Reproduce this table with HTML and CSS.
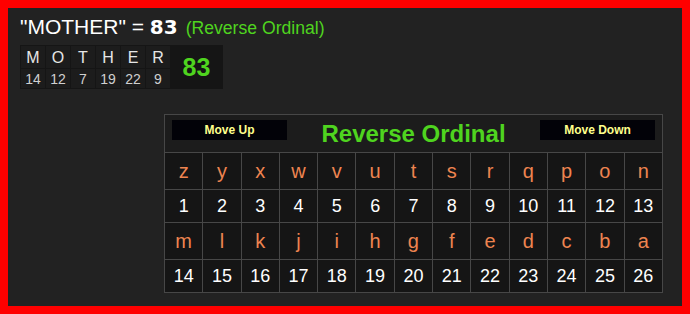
FILE: index.html
```html
<!DOCTYPE html>
<html>
<head>
<meta charset="utf-8">
<link rel="stylesheet" href="styles.css">
</head>
<body>
<div class="page">
  <div class="title">
    <span class="word">"MOTHER" = </span><span class="total">83</span><span class="cipher">(Reverse Ordinal)</span>
  </div>
  <div class="breakdown">
    <div class="bl">M</div><div class="bl">O</div><div class="bl">T</div><div class="bl">H</div><div class="bl">E</div><div class="bl">R</div>
    <div class="bsum">83</div>
    <div class="bn">14</div><div class="bn">12</div><div class="bn">7</div><div class="bn">19</div><div class="bn">22</div><div class="bn">9</div>
  </div>
  <table class="chart">
    <tr class="head">
      <td colspan="13">
        <div class="headbar">
          <button class="mv">Move Up</button>
          <span class="chart-title">Reverse Ordinal</span>
          <button class="mv">Move Down</button>
        </div>
      </td>
    </tr>
    <tr class="let"><td>z</td><td>y</td><td>x</td><td>w</td><td>v</td><td>u</td><td>t</td><td>s</td><td>r</td><td>q</td><td>p</td><td>o</td><td>n</td></tr>
    <tr class="num"><td>1</td><td>2</td><td>3</td><td>4</td><td>5</td><td>6</td><td>7</td><td>8</td><td>9</td><td>10</td><td>11</td><td>12</td><td>13</td></tr>
    <tr class="let"><td>m</td><td>l</td><td>k</td><td>j</td><td>i</td><td>h</td><td>g</td><td>f</td><td>e</td><td>d</td><td>c</td><td>b</td><td>a</td></tr>
    <tr class="num"><td>14</td><td>15</td><td>16</td><td>17</td><td>18</td><td>19</td><td>20</td><td>21</td><td>22</td><td>23</td><td>24</td><td>25</td><td>26</td></tr>
  </table>
</div>
</body>
</html>
```
FILE: styles.css
```css
html, body {
  margin: 0;
  padding: 0;
}
body {
  font-family: "Liberation Sans", Arial, sans-serif;
}
.page {
  box-sizing: border-box;
  width: 690px;
  height: 314px;
  border: 8px solid #ff0000;
  background: #222222;
  padding: 7px 0 0 12px;
}
.title {
  display: flex;
  align-items: baseline;
  height: 23px;
  line-height: 23px;
  color: #ffffff;
}
.word {
  font-size: 21px;
  white-space: pre;
}
.total {
  font-family: "DejaVu Sans", sans-serif;
  font-weight: bold;
  font-size: 20px;
}
.cipher {
  font-size: 17.6px;
  color: #4fd41f;
  margin-left: 8px;
}
.breakdown {
  margin-top: 7px;
  display: grid;
  grid-template-columns: repeat(6, 24px) 51px;
  grid-template-rows: 22px 19px;
  gap: 1px;
  padding: 1px;
  width: max-content;
  background: #151515;
}
.bl, .bn {
  background: #1c1c1c;
  text-align: center;
}
.bl {
  font-size: 16px;
  line-height: 23px;
  color: #e6e6e6;
}
.bn {
  font-size: 14px;
  line-height: 20px;
  color: #d0d0d0;
}
.bsum {
  grid-column: 7;
  grid-row: 1 / span 2;
  display: flex;
  align-items: center;
  justify-content: center;
  font-size: 25px;
  font-weight: bold;
  color: #4fd41f;
}
.chart {
  margin: 25px 0 0 144px;
  width: 499px;
  border-collapse: collapse;
  table-layout: fixed;
  background: #151515;
}
.chart td {
  border: 1px solid #474747;
  text-align: center;
  padding: 0;
}
.head td {
  height: 37px;
  background: #1c1c1c;
  vertical-align: top;
}
.headbar {
  display: flex;
  justify-content: space-between;
  align-items: flex-start;
  padding: 0 7px;
}
.mv {
  margin-top: 5px;
  width: 115px;
  height: 20px;
  background: #020208;
  border: none;
  padding: 0;
  color: #ffff8c;
  font-family: "Liberation Sans", Arial, sans-serif;
  font-weight: bold;
  font-size: 12px;
}
.chart-title {
  margin-top: 5px;
  font-size: 24px;
  font-weight: bold;
  color: #4fd41f;
  line-height: 28px;
}
.let td {
  height: 36px;
  font-size: 20px;
  color: #ee8450;
}
.num td {
  height: 32px;
  font-size: 18px;
  color: #ffffff;
}
```
